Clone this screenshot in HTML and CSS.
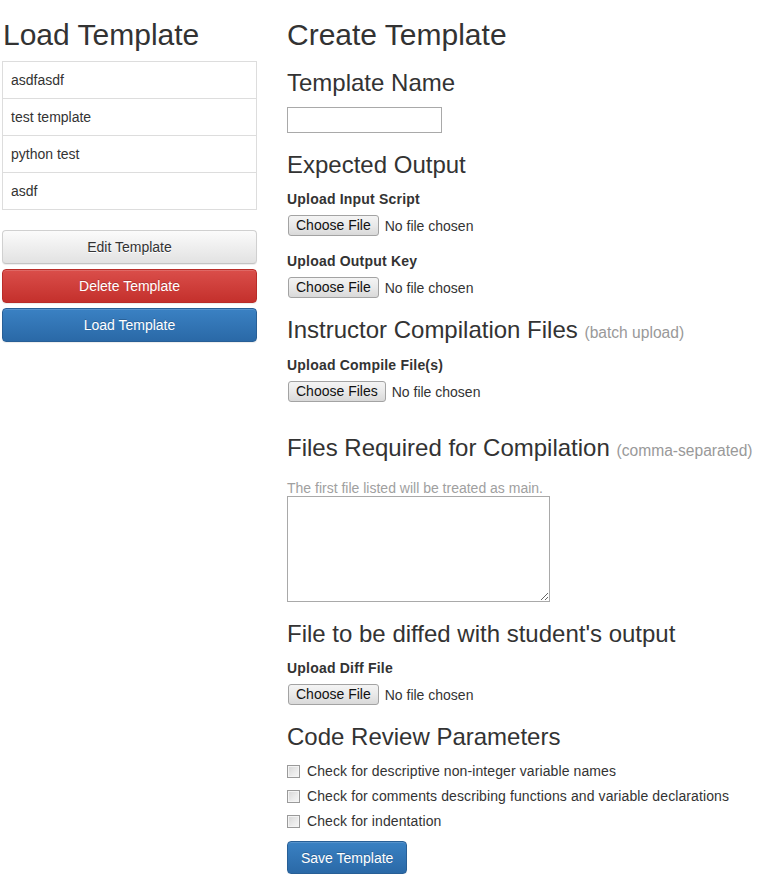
FILE: index.html
```html
<!DOCTYPE html>
<html lang="en">
<head>
<meta charset="utf-8">
<title>Templates</title>
<link rel="stylesheet" href="styles.css">
</head>
<body>
<div class="page">
  <aside class="sidebar">
    <h2 class="title">Load Template</h2>
    <ul class="list-group">
      <li class="list-item">asdfasdf</li>
      <li class="list-item">test template</li>
      <li class="list-item">python test</li>
      <li class="list-item">asdf</li>
    </ul>
    <div class="actions">
      <button class="btn btn-default" type="button">Edit Template</button>
      <button class="btn btn-danger" type="button">Delete Template</button>
      <button class="btn btn-primary" type="button">Load Template</button>
    </div>
  </aside>

  <main class="main">
    <h2 class="title">Create Template</h2>

    <h3 class="section">Template Name</h3>
    <input class="text-input" type="text">

    <h3 class="section">Expected Output</h3>
    <div class="form-group">
      <label class="field-label">Upload Input Script</label>
      <div class="file-input"><span class="file-btn">Choose File</span><span class="file-status">No file chosen</span></div>
    </div>
    <div class="form-group">
      <label class="field-label">Upload Output Key</label>
      <div class="file-input"><span class="file-btn">Choose File</span><span class="file-status">No file chosen</span></div>
    </div>

    <h3 class="section">Instructor Compilation Files <small class="muted">(batch upload)</small></h3>
    <div class="form-group form-group-wide">
      <label class="field-label">Upload Compile File(s)</label>
      <div class="file-input"><span class="file-btn">Choose Files</span><span class="file-status">No file chosen</span></div>
    </div>

    <h3 class="section">Files Required for Compilation <small class="muted">(comma-separated)</small></h3>
    <p class="help">The first file listed will be treated as main.</p>
    <textarea class="text-area"></textarea>

    <h3 class="section">File to be diffed with student's output</h3>
    <div class="form-group">
      <label class="field-label">Upload Diff File</label>
      <div class="file-input"><span class="file-btn">Choose File</span><span class="file-status">No file chosen</span></div>
    </div>

    <h3 class="section">Code Review Parameters</h3>
    <div class="checks">
      <label class="check"><input class="check-box" type="checkbox"><span>Check for descriptive non-integer variable names</span></label>
      <label class="check"><input class="check-box" type="checkbox"><span>Check for comments describing functions and variable declarations</span></label>
      <label class="check"><input class="check-box" type="checkbox"><span>Check for indentation</span></label>
    </div>
    <button class="btn btn-primary btn-save" type="button">Save Template</button>
  </main>
</div>
</body>
</html>
```

FILE: styles.css
```css
* { box-sizing: border-box; }

html, body {
  margin: 0;
  padding: 0;
  background: #fff;
}

body {
  font-family: "Liberation Sans", Arial, Helvetica, sans-serif;
  font-size: 14px;
  line-height: 20px;
  color: #333;
}

.page {
  display: flex;
  align-items: flex-start;
  gap: 30px;
  padding-left: 2px;
}

.sidebar {
  width: 255px;
  flex: 0 0 255px;
}

.main {
  flex: 1 1 auto;
  display: flow-root;
}

.title {
  font-size: 30px;
  line-height: 33px;
  font-weight: normal;
  margin: 18px 0 11px;
  color: #333;
}

.sidebar .title {
  margin-left: 1px;
  margin-bottom: 10px;
}

.list-group {
  list-style: none;
  margin: 0 0 20px;
  padding: 0;
}

.list-item {
  border: 1px solid #ddd;
  margin-bottom: -1px;
  padding: 8px 8px;
  line-height: 20px;
  background: #fff;
}

.list-item:last-child { margin-bottom: 0; }

.actions {
  display: flex;
  flex-direction: column;
  gap: 5px;
}

.btn {
  display: block;
  font-family: inherit;
  font-size: 14px;
  line-height: 20px;
  padding: 6px 12px;
  border-radius: 4px;
  border: 1px solid transparent;
  cursor: pointer;
  text-align: center;
  height: 34px;
  width: 100%;
  box-shadow: inset 0 1px 0 rgba(255,255,255,.15), 0 1px 1px rgba(0,0,0,.075);
}

.btn-default {
  color: #333;
  text-shadow: 0 1px 0 #fff;
  background: linear-gradient(to bottom, #fbfbfb 0%, #e2e2e2 100%);
  border-color: #d0d0d0 #d0d0d0 #c4c4c4;
}

.btn-danger {
  color: #fff;
  text-shadow: 0 -1px 0 rgba(0,0,0,.2);
  background: linear-gradient(to bottom, #da4e4a 0%, #c4302c 100%);
  border-color: #b92c28;
}

.btn-primary {
  color: #fff;
  text-shadow: 0 -1px 0 rgba(0,0,0,.2);
  background: linear-gradient(to bottom, #3a81c3 0%, #2a69a7 100%);
  border-color: #285f96;
}

.btn-save {
  width: auto;
  height: 33px;
  padding: 6px 13px;
  margin-top: 10px;
}

.section {
  font-size: 24px;
  line-height: 26px;
  font-weight: normal;
  margin: 19px 0 11px;
  color: #333;
}

.muted {
  font-size: 15.6px;
  color: #999;
  font-weight: normal;
}

.text-input {
  display: block;
  width: 155px;
  height: 26px;
  border: 1px solid #a9a9a9;
  margin: 11px 0 0;
  padding: 2px 4px;
  font: inherit;
  background: #fff;
}

.form-group { margin-bottom: 15px; }
.form-group-wide {
  margin-top: -2px;
  margin-bottom: 33px;
}

.field-label {
  display: block;
  font-weight: bold;
  margin-bottom: 6px;
  line-height: 20px;
  letter-spacing: 0.2px;
}

.file-input {
  display: flex;
  align-items: center;
  gap: 6px;
  height: 21px;
  margin-left: 1px;
}

.file-btn {
  display: inline-flex;
  align-items: center;
  height: 21px;
  padding: 0 7px;
  border: 1px solid #a3a3a3;
  border-radius: 3px;
  background: linear-gradient(to bottom, #f4f4f4 0%, #e9e9e9 50%, #d9d9d9 100%);
  color: #111;
  font-size: 14px;
  line-height: 19px;
}

.file-status {
  color: #333;
  font-size: 14px;
}

.help {
  color: #a0a0a0;
  margin: 16px 0 0;
  line-height: 16px;
}

.text-area {
  display: block;
  width: 263px;
  height: 106px;
  border: 1px solid #a9a9a9;
  margin: 0;
  padding: 2px;
  font: inherit;
  resize: both;
  background: #fff;
}

.checks {
  display: flex;
  flex-direction: column;
  gap: 5px;
  margin-top: 11px;
}

.check {
  display: flex;
  align-items: center;
  gap: 7px;
  height: 20px;
  line-height: 20px;
  letter-spacing: 0.1px;
  cursor: pointer;
}

.check-box {
  appearance: none;
  -webkit-appearance: none;
  width: 13px;
  height: 13px;
  margin: 1px 0 0;
  flex: 0 0 13px;
  border: 1px solid #9a9a9a;
  background: linear-gradient(135deg, #d6d6d6 0%, #ececec 60%, #f6f6f6 100%);
  box-shadow: inset 0 0 0 1px #f4f4f4;
}
```
